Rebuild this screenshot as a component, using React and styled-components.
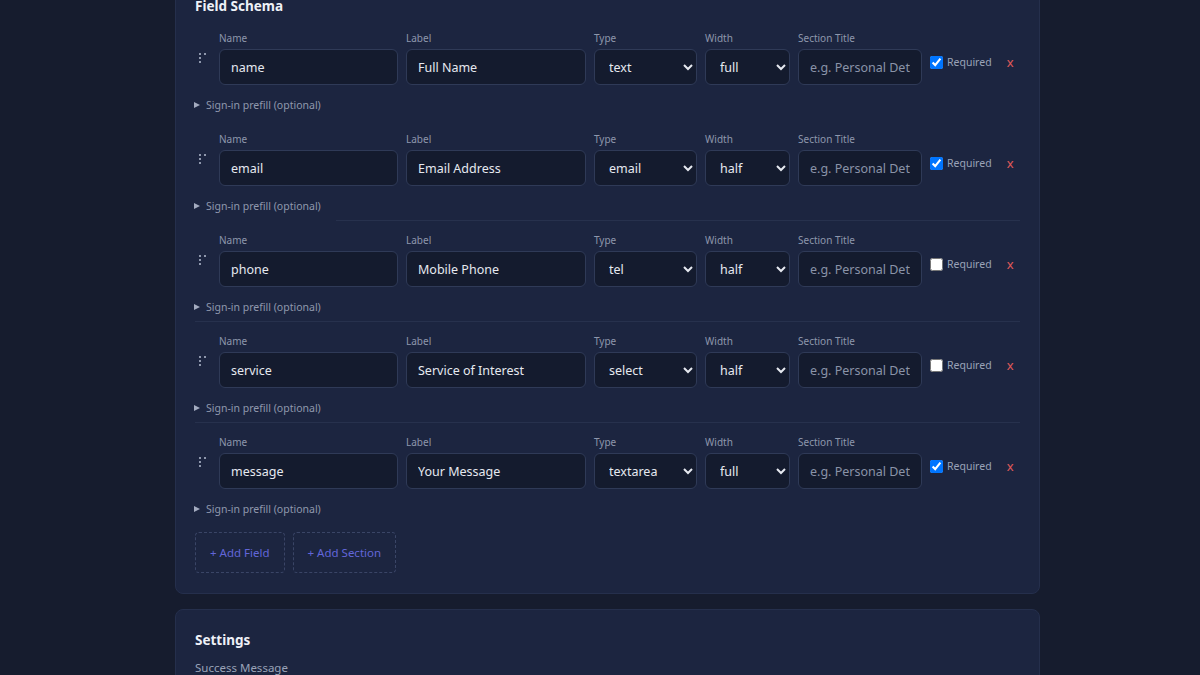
import React from "react";
import styled, { createGlobalStyle } from "styled-components";

const Global = createGlobalStyle`
  html, body { margin: 0; padding: 0; background: #161c2e; }
  body { font-family: "Noto Sans", "Open Sans", sans-serif; color: #e6e9f0; overflow: hidden; }
  * { box-sizing: border-box; }
`;

const Page = styled.div`
  width: 1200px;
  height: 675px;
  overflow: hidden;
  background: #161c2e;
`;

const Column = styled.div`
  width: 865px;
  margin: -25px 0 0 175px;
  display: flex;
  flex-direction: column;
  gap: 15px;
`;

const Card = styled.section`
  background: #1c2540;
  border: 1px solid #252f4c;
  border-radius: 8px;
  padding: 20px 19px 20px;
`;

const CardTitle = styled.h2`
  margin: 0 0 ${(p) => p.$mb || 0}px;
  font-size: 13.5px;
  line-height: 20px;
  font-weight: 700;
  color: #eef1f7;
`;

const Row = styled.div`
  padding: 12px 0 6px;
`;

const Fields = styled.div`
  display: flex;
  align-items: center;
  gap: 8px;
`;

const Handle = styled.div`
  flex: 0 0 16px;
  padding-left: 4px;
  display: flex;
  align-items: center;
`;

const Field = styled.label`
  flex: 0 0 ${(p) => p.$w}px;
  display: flex;
  flex-direction: column;
  gap: 4px;
  width: ${(p) => p.$w}px;
`;

const FieldLabel = styled.span`
  font-size: 10px;
  line-height: 14px;
  color: #8e97ac;
`;

const TextInput = styled.input`
  height: 36px;
  width: 100%;
  background: #141b2e;
  border: 1px solid #2f3a57;
  border-radius: 6px;
  padding: 0 11px;
  font-family: inherit;
  font-size: 12.5px;
  color: #e6e9f0;
  outline: none;
  &::placeholder { color: #8a93a8; }
`;

const Select = styled.select`
  height: 36px;
  width: 100%;
  background: #141b2e;
  border: 1px solid #2f3a57;
  border-radius: 6px;
  padding: 0 6px 0 10px;
  font-family: inherit;
  font-size: 12.5px;
  color: #e6e9f0;
  outline: none;
`;

const Required = styled.label`
  flex: 0 0 auto;
  display: flex;
  align-items: center;
  gap: 4px;
  margin-top: 8px;
  font-size: 10.5px;
  color: #9aa3b8;
  input { margin: 0; width: 13px; height: 13px; }
`;

const RemoveBtn = styled.button`
  flex: 0 0 auto;
  margin: 8px 0 0 3px;
  background: none;
  border: none;
  padding: 0 4px;
  font-family: inherit;
  font-size: 13px;
  color: #e05a5a;
  cursor: pointer;
`;

const Prefill = styled.details`
  margin-top: 12px;
  font-size: 10.5px;
  line-height: 16px;
  color: #8f98ad;
`;

const Summary = styled.summary`
  list-style: none;
  display: flex;
  align-items: center;
  gap: 6px;
  height: 16px;
  cursor: pointer;
  &::-webkit-details-marker { display: none; }
  &::before {
    content: "";
    width: 0;
    height: 0;
    border-left: 6px solid #a3abbf;
    border-top: 3.5px solid transparent;
    border-bottom: 3.5px solid transparent;
    margin-left: -1px;
  }
`;

const Divider = styled.div`
  height: 1px;
  margin-left: ${(p) => p.$indent || 0}px;
  background: ${(p) => (p.$hidden ? "transparent" : "#27314d")};
`;

const Actions = styled.div`
  display: flex;
  gap: 8px;
  margin-top: 9px;
`;

const DashedButton = styled.button`
  height: 41px;
  padding: 0 14px;
  background: transparent;
  border: 1px dashed #3a4566;
  border-radius: 4px;
  font-family: inherit;
  font-size: 11.5px;
  color: #6266d9;
  cursor: pointer;
`;

const SettingLabel = styled.div`
  margin-top: 10px;
  font-size: 11.5px;
  line-height: 16px;
  color: #9aa3b8;
`;

const fields = [
  { name: "name", label: "Full Name", type: "text", width: "full", required: true },
  { name: "email", label: "Email Address", type: "email", width: "half", required: true },
  { name: "phone", label: "Mobile Phone", type: "tel", width: "half", required: false },
  { name: "service", label: "Service of Interest", type: "select", width: "half", required: false },
  { name: "message", label: "Your Message", type: "textarea", width: "full", required: true },
];

const types = ["text", "email", "tel", "select", "textarea"];
const widths = ["full", "half"];

function DragDots() {
  return (
    <svg width="7" height="10" viewBox="0 0 7 10">
      <g fill="#8e97ac">
        <rect x="0" y="0" width="2" height="2" />
        <rect x="0" y="4" width="2" height="2" />
        <rect x="0" y="8" width="2" height="2" />
        <rect x="5" y="0" width="2" height="2" />
      </g>
    </svg>
  );
}

function FieldRow({ f }) {
  return (
    <Row>
      <Fields>
        <Handle><DragDots /></Handle>
        <Field $w={179}>
          <FieldLabel>Name</FieldLabel>
          <TextInput defaultValue={f.name} />
        </Field>
        <Field $w={180}>
          <FieldLabel>Label</FieldLabel>
          <TextInput defaultValue={f.label} />
        </Field>
        <Field $w={103}>
          <FieldLabel>Type</FieldLabel>
          <Select defaultValue={f.type}>
            {types.map((t) => <option key={t}>{t}</option>)}
          </Select>
        </Field>
        <Field $w={85}>
          <FieldLabel>Width</FieldLabel>
          <Select defaultValue={f.width}>
            {widths.map((w) => <option key={w}>{w}</option>)}
          </Select>
        </Field>
        <Field $w={124}>
          <FieldLabel>Section Title</FieldLabel>
          <TextInput placeholder="e.g. Personal Details" />
        </Field>
        <Required>
          <input type="checkbox" defaultChecked={f.required} />
          Required
        </Required>
        <RemoveBtn>x</RemoveBtn>
      </Fields>
      <Prefill>
        <Summary>Sign-in prefill (optional)</Summary>
      </Prefill>
    </Row>
  );
}

export default function App() {
  return (
    <Page>
      <Global />
      <Column>
        <Card>
          <CardTitle $mb={3}>Field Schema</CardTitle>
          {fields.map((f, i) => (
            <React.Fragment key={f.name}>
              {i > 0 && <Divider $hidden={i === 1} $indent={i === 2 ? 141 : 0} />}
              <FieldRow f={f} />
            </React.Fragment>
          ))}
          <Actions>
            <DashedButton>+ Add Field</DashedButton>
            <DashedButton>+ Add Section</DashedButton>
          </Actions>
        </Card>
        <Card>
          <CardTitle>Settings</CardTitle>
          <SettingLabel>Success Message</SettingLabel>
        </Card>
      </Column>
    </Page>
  );
}
